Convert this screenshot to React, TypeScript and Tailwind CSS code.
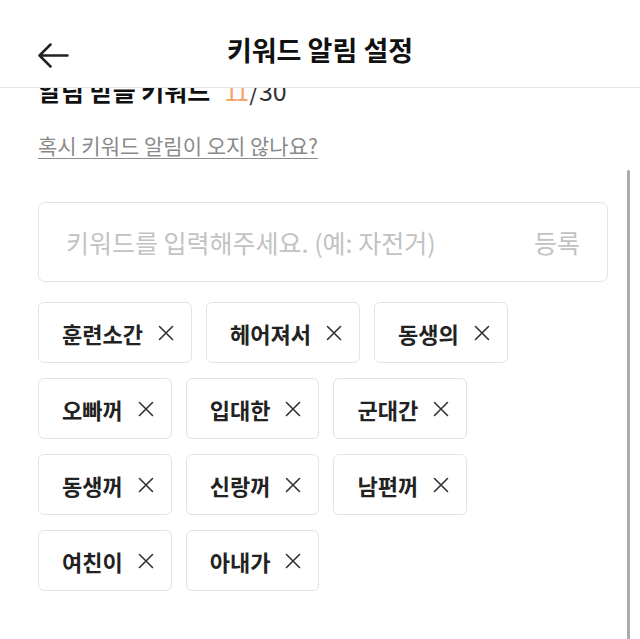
import React from "react";

const rows: string[][] = [
  ["훈련소간", "헤어져서", "동생의"],
  ["오빠꺼", "입대한", "군대간"],
  ["동생꺼", "신랑꺼", "남편꺼"],
  ["여친이", "아내가"],
];

function XIcon() {
  return (
    <svg width="16" height="16" viewBox="0 0 16 16" fill="none" stroke="#333" strokeWidth="1.6" strokeLinecap="round">
      <path d="M1.5 1.5 L14.5 14.5 M14.5 1.5 L1.5 14.5" />
    </svg>
  );
}

function Chip({ label }: { label: string }) {
  return (
    <div className="flex h-[61px] items-center rounded-[6px] border border-[#e3e3e3] bg-white pl-[23px] pr-[17px]">
      <span className="text-[22px] leading-[30px] font-bold text-[#222]">{label}</span>
      <span className="ml-[15px] flex items-center">
        <XIcon />
      </span>
    </div>
  );
}

export default function App() {
  return (
    <div
      className="flex h-[639px] w-[640px] flex-col overflow-hidden bg-white"
      style={{ fontFamily: '"Noto Sans CJK KR", "Noto Sans", sans-serif' }}
    >
      <header className="relative z-10 flex h-[88px] shrink-0 items-center border-b border-[#e4e4e4] bg-white pt-[14px]">
        <div className="ml-[38px] mt-[10px] flex items-center">
          <svg width="31" height="25" viewBox="0 0 31 25" fill="none" stroke="#222" strokeWidth="2.5" strokeLinecap="round" strokeLinejoin="round">
            <path d="M1.5 12.5 H29.5 M12.5 1.5 L1.5 12.5 L12.5 23.5" />
          </svg>
        </div>
        <h1 className="pointer-events-none absolute left-0 right-0 top-[30px] text-center text-[27px] leading-[40px] font-bold text-[#111]">
          키워드 알림 설정
        </h1>
      </header>
      <main className="relative flex-1 overflow-hidden">
        <div className="-mt-[16px] px-[38px]">
          <div className="flex items-baseline text-[25px] leading-[36px]">
            <span className="font-bold text-[#111]">알림 받을 키워드</span>
            <span className="ml-[14px] tracking-[-3px] text-[#f4a46e]">11</span>
            <span className="ml-[3px] text-[#333]">/30</span>
          </div>
          <div className="mt-[21px] text-[21px] leading-[32px]">
            <span className="text-[#8a8a8a] underline decoration-1 underline-offset-[4px]">
              혹시 키워드 알림이 오지 않나요?
            </span>
          </div>
          <div className="mt-[41px] flex h-[80px] w-[570px] items-center justify-between rounded-[7px] border border-[#e3e3e3] pl-[27px] pr-[27px]">
            <span className="text-[25px] leading-[36px] text-[#c2c2c2]">키워드를 입력해주세요. (예: 자전거)</span>
            <span className="text-[25px] leading-[36px] text-[#c2c2c2]">등록</span>
          </div>
          <div className="mt-[20px] flex flex-col gap-[15px]">
            {rows.map((row, i) => (
              <div key={i} className="flex gap-[14px]">
                {row.map((k) => (
                  <Chip key={k} label={k} />
                ))}
              </div>
            ))}
          </div>
        </div>
        <div className="absolute right-[10px] top-[82px] bottom-0 w-[3px] rounded-t-full bg-[#ababab]" />
      </main>
    </div>
  );
}
